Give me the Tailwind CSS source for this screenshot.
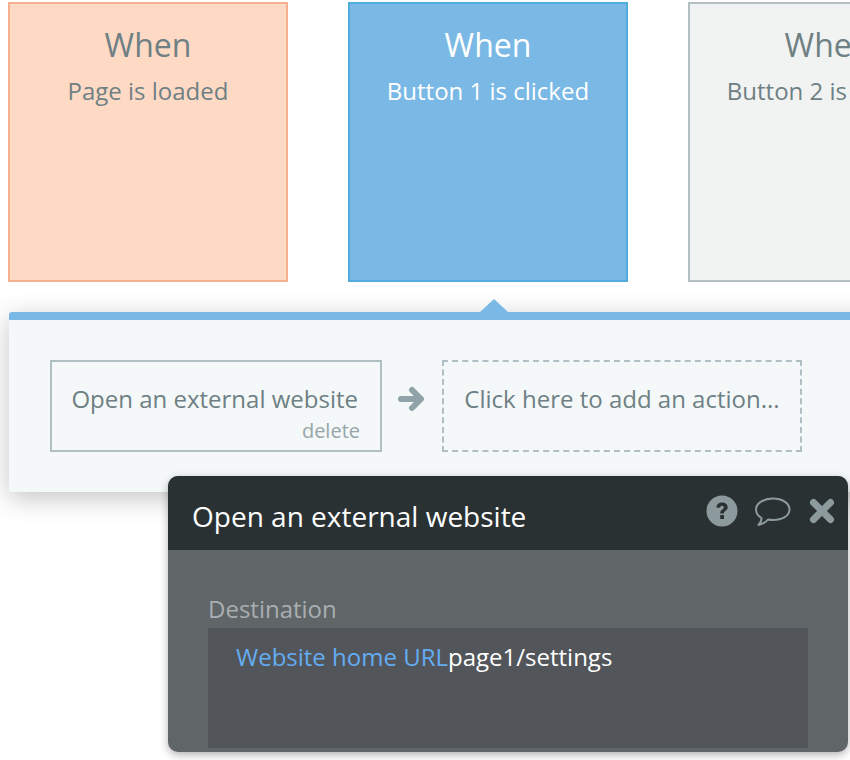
<!DOCTYPE html>
<html lang="en">
  <head>
    <meta charset="UTF-8" />
    <title>Workflow editor</title>
    <script src="https://cdn.jsdelivr.net/npm/@tailwindcss/browser@4"></script>
  </head>
  <body class="bg-white font-['Open_Sans',sans-serif]">
    <div class="relative w-[850px] h-[760px] overflow-hidden">
      <!-- event cards -->
      <div class="flex gap-[60px] pt-[2px] pl-[8px] w-[1200px]">
        <div class="w-[280px] h-[280px] shrink-0 border-2 border-[#f7b08d] bg-[#fedac5] text-center text-[#6f8084]">
          <div class="text-[32px] leading-[40px] mt-[21px]">When</div>
          <div class="text-[24px] leading-[32px] mt-[10px]">Page is loaded</div>
        </div>
        <div class="w-[280px] h-[280px] shrink-0 border-2 border-[#52acdd] bg-[#7ab9e5] text-center text-white">
          <div class="text-[32px] leading-[40px] mt-[21px]">When</div>
          <div class="text-[24px] leading-[32px] mt-[10px]">Button 1 is clicked</div>
        </div>
        <div class="w-[280px] h-[280px] shrink-0 border-2 border-[#b4bfc2] bg-[#f1f3f2] text-center text-[#6f8084]">
          <div class="text-[32px] leading-[40px] mt-[21px]">When</div>
          <div class="text-[24px] leading-[32px] mt-[10px]">Button 2 is clicked</div>
        </div>
      </div>

      <!-- actions panel -->
      <div class="relative ml-[9px] mt-[30px] w-[900px] h-[180px] rounded-[3px] border-t-8 border-[#7ab9e5] bg-[#f4f8f9] shadow-[0_6px_26px_rgba(0,0,0,0.24)]">
        <div class="absolute left-[471px] top-[-21px] w-0 h-0 border-x-[14px] border-x-transparent border-b-[13px] border-b-[#7ab9e5]"></div>
        <div class="flex items-start pl-[41px] pt-[40px]">
          <div class="w-[332px] h-[92px] border-2 border-[#b0bfc4] text-[#6f8084] pr-[22px] text-right">
            <div class="text-[24px] leading-[32px] mt-[21px] whitespace-nowrap">Open an external website</div>
            <div class="text-[20px] leading-[24px] mt-[4px] mr-[-2px] text-[#98a6a9]">delete</div>
          </div>
          <svg class="w-[28px] h-[28px] ml-[15px] mt-[25px] shrink-0" viewBox="0 0 28 28" fill="none" stroke="#8fa3a9" stroke-width="6" stroke-linecap="round" stroke-linejoin="round">
            <path d="M4 14H23" />
            <path d="M15 5L24 14L15 23" />
          </svg>
          <div class="w-[360px] h-[92px] ml-[17px] border-2 border-dashed border-[#b0bfc4] text-[#6f8084] text-[24px] leading-[32px] pt-[21px] text-center whitespace-nowrap">Click here to add an action...</div>
        </div>
      </div>

      <!-- property editor -->
      <div class="absolute left-[168px] top-[476px] w-[680px] h-[276px] rounded-[10px] bg-[#606568] shadow-[0_3px_8px_rgba(0,0,0,0.3)] overflow-hidden">
        <div class="flex items-center h-[74px] bg-[#2a3133] pl-[24px] pr-[12px]">
          <div class="flex-1 text-white text-[28px] leading-[36px] mt-[5px]">Open an external website</div>
          <svg class="w-[32px] h-[32px] mt-[-4px]" viewBox="0 0 32 32">
            <circle cx="16" cy="16" r="15.500" fill="#8c9a9e" />
            <path d="M10.500 12.500C10.500 9.300 13 7.500 16 7.500C19.200 7.500 21.700 9.300 21.700 12.300C21.700 15.800 17.800 15.800 17.800 18.500H14.200C14.200 14.300 17.800 14.500 17.800 12.400C17.800 11.400 17 10.800 16 10.800C14.900 10.800 14.200 11.500 14.100 12.700Z" fill="#2a3133" />
            <rect x="14.200" y="20" width="3.800" height="4" fill="#2a3133" />
          </svg>
          <svg class="w-[38px] h-[32px] ml-[16px] mt-[-2px]" viewBox="0 0 38 32" fill="none" stroke="#8c9a9e" stroke-width="2">
            <path d="M19 2.500C28 2.500 35.500 7 35.500 13.500C35.500 20 28 24 19 24C17 24 15.500 23.800 14 23.500C12 26 9 28 4.500 29C6.500 27 7.500 24.500 7.500 22C4 20 2 17 2 13.500C2 7 10 2.500 19 2.500Z" stroke-linejoin="round" />
          </svg>
          <svg class="w-[26px] h-[26px] ml-[17px] mt-[-4px] mr-[1px]" viewBox="0 0 26 26" fill="none" stroke="#8c9a9e" stroke-width="7" stroke-linecap="round">
            <path d="M4.500 4.500L21.500 21.500" />
            <path d="M21.500 4.500L4.500 21.500" />
          </svg>
        </div>
        <div class="px-[40px] pt-[45px]">
          <div class="text-[#a9aeb1] text-[24px] leading-[28px] mb-[5px]">Destination</div>
          <div class="h-[120px] rounded-[2px] bg-[#52565a] pl-[28px] pt-[11px] text-[24px] leading-[36px] text-white">
            <span class="text-[#64acf2]">Website home URL</span>page1/settings
          </div>
        </div>
      </div>
    </div>
  </body>
</html>
